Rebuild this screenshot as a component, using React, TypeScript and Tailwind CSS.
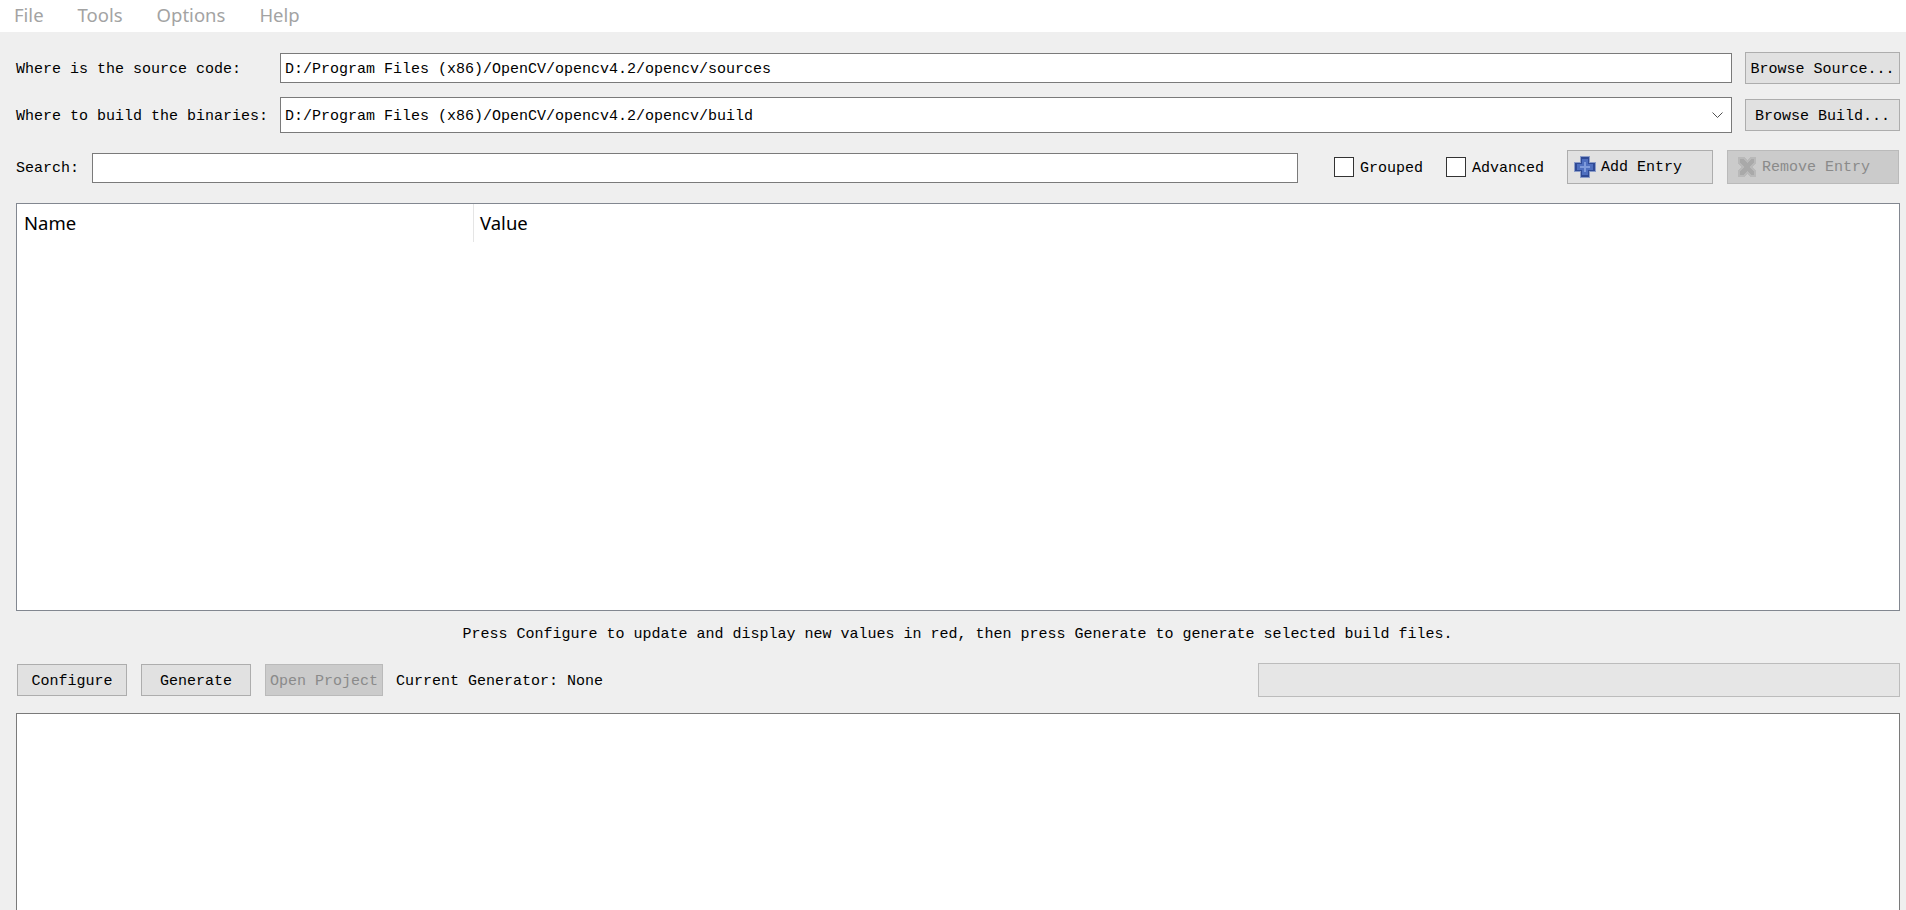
const mono = "font-['Liberation_Mono','Noto_Sans_CJK_SC',monospace] text-[15px] leading-none text-black";

function MenuItem({ label }: { label: string }) {
  return <span className="text-[18.5px] text-[#a3a3a3]">{label}</span>;
}

function Button({ label, className, disabled }: { label: string; className: string; disabled?: boolean }) {
  return (
    <button
      className={
        "flex items-center justify-center border pt-[2px] whitespace-nowrap " +
        (disabled ? "border-[#bababa] bg-[#cbcbcb] text-[#8a8a8a] " : "border-[#adadad] bg-[#e1e1e1] ") +
        className
      }
    >
      {label}
    </button>
  );
}

function Checkbox({ label, className }: { label: string; className: string }) {
  return (
    <div className={"flex items-center gap-[6px] " + className}>
      <span className="h-5 w-5 border border-[#333333] bg-white" />
      <span className="pt-[3px]">{label}</span>
    </div>
  );
}

function AddIcon() {
  return (
    <svg width="22" height="22" viewBox="0 0 22 22" shapeRendering="crispEdges">
      <path d="M6 0h10v6h6v10h-6v6H6v-6H0V6h6z" fill="#8c9dc9" />
      <path d="M7 1h8v6h6v8h-6v6H7v-6H1V7h6z" fill="#2f4a96" />
      <path d="M8 3h6v5h5v6h-5v5H8v-5H3V8h5z" fill="#4f6fbf" />
      <path d="M10 6h2v4h4v2h-4v4h-2v-4H6v-2h4z" fill="#7f9bdc" />
    </svg>
  );
}

function RemoveIcon() {
  return (
    <svg width="22" height="22" viewBox="0 0 22 22" shapeRendering="crispEdges">
      <path d="M2 1h6l3 3 3-3h6v6l-3 4 3 4v6h-6l-3-3-3 3H2v-6l3-4-3-4z" fill="#b9b9b9" />
      <path d="M4 3h3l4 4 4-4h3v3l-4 5 4 5v3h-3l-4-4-4 4H4v-3l4-5-4-5z" fill="#a9a9a9" />
    </svg>
  );
}

export default function App() {
  return (
    <div className={"flex h-[910px] flex-col overflow-hidden bg-[#efefef] " + mono}>
      <div className="flex h-[32px] items-center gap-[34px] bg-white pb-[2px] pl-[14px] font-['Noto_Sans','Noto_Sans_CJK_SC',sans-serif]">
        <MenuItem label="File" />
        <MenuItem label="Tools" />
        <MenuItem label="Options" />
        <MenuItem label="Help" />
      </div>

      <div className="flex flex-1 flex-col pl-[16px] pr-[6px]">
        <div className="mt-[20px] flex h-[32px] items-center">
          <span className="w-[264px] pt-[2px] whitespace-nowrap">Where is the source code:</span>
          <div className="flex h-[30px] flex-1 items-center border border-[#7a7a7a] bg-white pl-[4px] pt-[3px]">
            D:/Program Files (x86)/OpenCV/opencv4.2/opencv/sources
          </div>
          <Button label="Browse Source..." className="ml-[13px] h-[32px] w-[155px]" />
        </div>

        <div className="mt-[13px] flex h-[36px] items-center">
          <span className="w-[264px] pt-[2px] whitespace-nowrap">Where to build the binaries:</span>
          <div className="flex h-[36px] flex-1 items-center justify-between border border-[#7a7a7a] bg-white pl-[4px] pr-[8px]">
            <span className="pt-[2px]">D:/Program Files (x86)/OpenCV/opencv4.2/opencv/build</span>
            <svg width="11" height="6" viewBox="0 0 11 6" fill="none" stroke="#505050">
              <path d="M0.5 0.5l5 5 5-5" />
            </svg>
          </div>
          <Button label="Browse Build..." className="ml-[13px] h-[32px] w-[155px]" />
        </div>

        <div className="mt-[17px] flex h-[34px] items-center">
          <span className="w-[76px] pt-[3px] whitespace-nowrap">Search:</span>
          <div className="mt-[2px] h-[30px] w-[1206px] border border-[#7a7a7a] bg-white" />
          <Checkbox label="Grouped" className="ml-[36px] w-[112px]" />
          <Checkbox label="Advanced" className="w-[121px]" />
          <button className="flex h-[34px] w-[146px] items-center gap-[5px] border border-[#adadad] bg-[#e1e1e1] pl-[6px]">
            <AddIcon />
            <span>Add Entry</span>
          </button>
          <button className="ml-[14px] flex h-[34px] w-[172px] items-center gap-[4px] border border-[#bababa] bg-[#cbcbcb] pl-[8px] text-[#8a8a8a]">
            <RemoveIcon />
            <span>Remove Entry</span>
          </button>
        </div>

        <div className="mt-[19px] h-[408px] border border-[#828790] bg-white">
          <div className="flex h-[38px] items-center font-['Noto_Sans','Noto_Sans_CJK_SC',sans-serif] text-[18.5px]">
            <span className="h-full w-[457px] border-r border-[#e5e5e5] pl-[7px] leading-[38px]">Name</span>
            <span className="pl-[6px]">Value</span>
          </div>
        </div>

        <div className="mt-[14px] flex h-[18px] items-center justify-center pr-[1px]">
          Press Configure to update and display new values in red, then press Generate to generate selected build files.
        </div>

        <div className="mt-[20px] flex h-[34px] items-center">
          <Button label="Configure" className="ml-[1px] h-[32px] w-[110px]" />
          <Button label="Generate" className="ml-[14px] h-[32px] w-[110px]" />
          <Button label="Open Project" disabled className="ml-[14px] h-[32px] w-[118px]" />
          <span className="ml-[13px] pt-[2px] whitespace-nowrap">Current Generator: None</span>
          <div className="ml-auto h-[34px] w-[642px] border border-[#bcbcbc] bg-[#e6e6e6]" />
        </div>

        <div className="mt-[16px] flex-1 border border-b-0 border-[#7a7a7a] bg-white" />
      </div>
    </div>
  );
}
